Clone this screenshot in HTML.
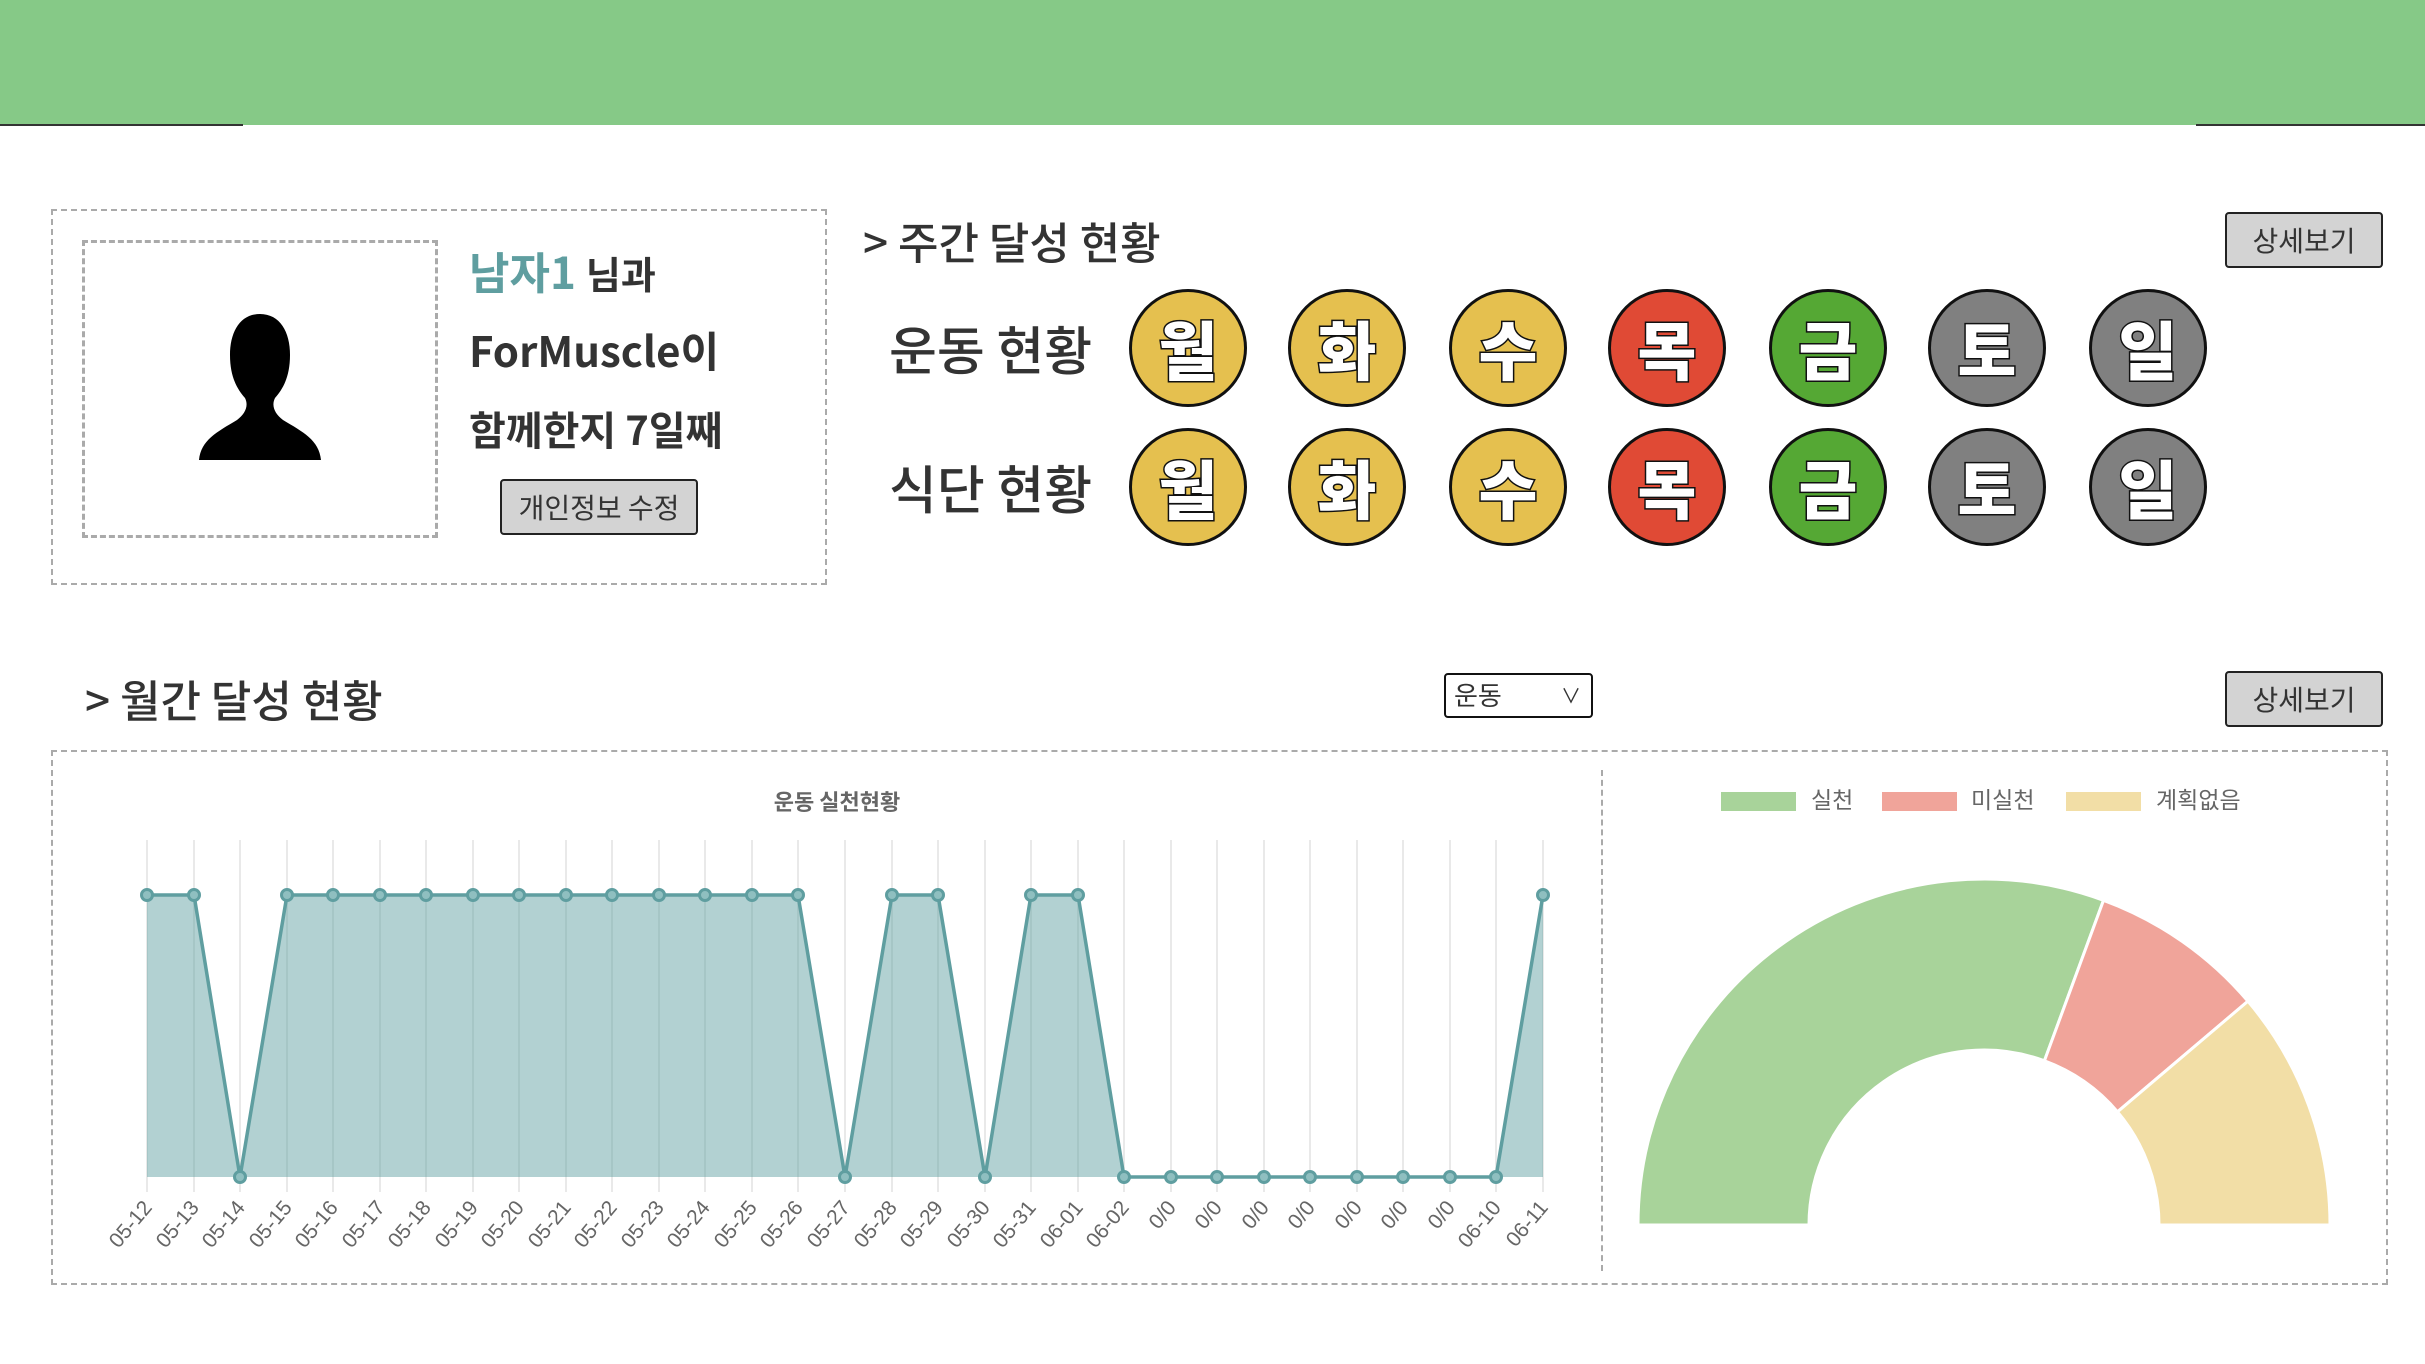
<!DOCTYPE html>
<html><head><meta charset="utf-8"><style>
*{margin:0;padding:0;box-sizing:border-box}
body{width:2425px;height:1364px;position:relative;background:#fff;font-family:"Liberation Sans","Noto Sans CJK KR",sans-serif;color:#333;overflow:hidden}
.a{position:absolute}
.k{font-family:"Noto Sans CJK KR","Liberation Sans",sans-serif;font-weight:700;white-space:nowrap}
.btn{position:absolute;background:#d3d3d3;border:2px solid #222;border-radius:4px;display:flex;align-items:center;justify-content:center;font-family:"Noto Sans CJK KR",sans-serif;font-size:28px;color:#333}
.c{position:absolute;width:118px;height:118px;border-radius:50%;border:3px solid #111;display:flex;align-items:center;justify-content:center;font-family:"Noto Sans CJK KR",sans-serif;font-weight:900;font-size:64px;color:#fff;-webkit-text-stroke:3px #111;paint-order:stroke fill;line-height:1}
.y{background:#e5c04f}.r{background:#e04a35}.g{background:#55a834}.d{background:#808080}
</style></head><body>
<div class="a" style="left:0;top:0;width:2425px;height:125px;background:#86c987"></div>
<div class="a" style="left:0;top:124px;width:243px;height:2px;background:#333"></div>
<div class="a" style="left:2196px;top:124px;width:229px;height:2px;background:#333"></div>

<div class="a" style="left:51px;top:209px;width:776px;height:376px;border:2px dashed #aaa"></div>
<div class="a" style="left:82px;top:240px;width:356px;height:298px;border:3px dashed #aaa"></div>
<svg class="a" style="left:195px;top:310px" width="130" height="152" viewBox="0 0 130 152">
<path d="M65 4C45 4 35 22 35 45C35 68 43 80 50 88C54 96 50 104 42 110C22 122 6 130 4 150L126 150C124 130 108 122 88 110C80 104 76 96 80 88C87 80 95 68 95 45C95 22 85 4 65 4Z" fill="#000"/></svg>
<div class="a k" style="left:469px;top:240px;font-size:44px;line-height:60px"><span style="color:#5f9ea0">남자1</span> <span style="font-size:38px">님과</span></div>
<div class="a k" style="left:469px;top:320px;font-size:42px;line-height:60px">ForMuscle이</div>
<div class="a k" style="left:469px;top:398px;font-size:40px;line-height:60px">함께한지 7일째</div>
<div class="btn" style="left:500px;top:479px;width:198px;height:56px">개인정보 수정</div>

<div class="a k" style="left:863px;top:210px;font-size:44px;line-height:60px;font-weight:500">&gt; 주간 달성 현황</div>
<div class="btn" style="left:2225px;top:212px;width:158px;height:56px">상세보기</div>
<div class="a k" style="left:889px;top:316px;font-size:52px;line-height:64px;font-weight:500">운동 현황</div>
<div class="a k" style="left:889px;top:455px;font-size:52px;line-height:64px;font-weight:500">식단 현황</div>

<div class="c y" style="left:1129px;top:289px">월</div>
<div class="c y" style="left:1288px;top:289px">화</div>
<div class="c y" style="left:1449px;top:289px">수</div>
<div class="c r" style="left:1608px;top:289px">목</div>
<div class="c g" style="left:1769px;top:289px">금</div>
<div class="c d" style="left:1928px;top:289px">토</div>
<div class="c d" style="left:2089px;top:289px">일</div>
<div class="c y" style="left:1129px;top:428px">월</div>
<div class="c y" style="left:1288px;top:428px">화</div>
<div class="c y" style="left:1449px;top:428px">수</div>
<div class="c r" style="left:1608px;top:428px">목</div>
<div class="c g" style="left:1769px;top:428px">금</div>
<div class="c d" style="left:1928px;top:428px">토</div>
<div class="c d" style="left:2089px;top:428px">일</div>

<div class="a k" style="left:85px;top:668px;font-size:44px;line-height:60px;font-weight:500">&gt; 월간 달성 현황</div>
<div class="a" style="left:1444px;top:673px;width:149px;height:45px;border:2px solid #111;border-radius:4px;font-family:'Noto Sans CJK KR',sans-serif;font-size:26px;padding-left:8px;line-height:40px">운동<span style="position:absolute;right:10px;top:0;font-size:20px">&#8744;</span></div>
<div class="btn" style="left:2225px;top:671px;width:158px;height:56px">상세보기</div>

<div class="a" style="left:51px;top:750px;width:2337px;height:535px;border:2px dashed #aaa"></div>
<div class="a" style="left:1601px;top:770px;width:0;height:501px;border-left:2px dashed #aaa"></div>

<svg class="a" style="left:0;top:0" width="2425" height="1364">
<text x="837" y="810" text-anchor="middle" font-family="Noto Sans CJK KR,sans-serif" font-weight="700" font-size="22" fill="#666">운동 실천현황</text>
<g stroke="#e2e2e2" stroke-width="1.5">
<path d="M147 840V1192M194 840V1192M240 840V1192M287 840V1192M333 840V1192M380 840V1192M426 840V1192M473 840V1192M519 840V1192M566 840V1192M612 840V1192M659 840V1192M705 840V1192M752 840V1192M798 840V1192M845 840V1192M892 840V1192M938 840V1192M985 840V1192M1031 840V1192M1078 840V1192M1124 840V1192M1171 840V1192M1217 840V1192M1264 840V1192M1310 840V1192M1357 840V1192M1403 840V1192M1450 840V1192M1496 840V1192M1543 840V1192"/>
</g>
<path d="M147 895L194 895L240 1177L287 895L333 895L380 895L426 895L473 895L519 895L566 895L612 895L659 895L705 895L752 895L798 895L845 1177L892 895L938 895L985 1177L1031 895L1078 895L1124 1177L1171 1177L1217 1177L1264 1177L1310 1177L1357 1177L1403 1177L1450 1177L1496 1177L1543 895L1543 1177L147 1177Z" fill="rgba(95,158,160,0.48)"/>
<path d="M147 895L194 895L240 1177L287 895L333 895L380 895L426 895L473 895L519 895L566 895L612 895L659 895L705 895L752 895L798 895L845 1177L892 895L938 895L985 1177L1031 895L1078 895L1124 1177L1171 1177L1217 1177L1264 1177L1310 1177L1357 1177L1403 1177L1450 1177L1496 1177L1543 895" fill="none" stroke="#5f9ea0" stroke-width="3.5"/>
<g fill="#8fbfc0" stroke="#5f9ea0" stroke-width="3">
<circle cx="147" cy="895" r="5.5"/><circle cx="194" cy="895" r="5.5"/><circle cx="240" cy="1177" r="5.5"/><circle cx="287" cy="895" r="5.5"/><circle cx="333" cy="895" r="5.5"/><circle cx="380" cy="895" r="5.5"/><circle cx="426" cy="895" r="5.5"/><circle cx="473" cy="895" r="5.5"/><circle cx="519" cy="895" r="5.5"/><circle cx="566" cy="895" r="5.5"/><circle cx="612" cy="895" r="5.5"/><circle cx="659" cy="895" r="5.5"/><circle cx="705" cy="895" r="5.5"/><circle cx="752" cy="895" r="5.5"/><circle cx="798" cy="895" r="5.5"/><circle cx="845" cy="1177" r="5.5"/><circle cx="892" cy="895" r="5.5"/><circle cx="938" cy="895" r="5.5"/><circle cx="985" cy="1177" r="5.5"/><circle cx="1031" cy="895" r="5.5"/><circle cx="1078" cy="895" r="5.5"/><circle cx="1124" cy="1177" r="5.5"/><circle cx="1171" cy="1177" r="5.5"/><circle cx="1217" cy="1177" r="5.5"/><circle cx="1264" cy="1177" r="5.5"/><circle cx="1310" cy="1177" r="5.5"/><circle cx="1357" cy="1177" r="5.5"/><circle cx="1403" cy="1177" r="5.5"/><circle cx="1450" cy="1177" r="5.5"/><circle cx="1496" cy="1177" r="5.5"/><circle cx="1543" cy="895" r="5.5"/>
</g>
<g font-family="Liberation Sans,sans-serif" font-size="21" fill="#666" text-anchor="end">
<text transform="translate(153 1208) rotate(-50)">05-12</text><text transform="translate(200 1208) rotate(-50)">05-13</text><text transform="translate(246 1208) rotate(-50)">05-14</text><text transform="translate(293 1208) rotate(-50)">05-15</text><text transform="translate(339 1208) rotate(-50)">05-16</text><text transform="translate(386 1208) rotate(-50)">05-17</text><text transform="translate(432 1208) rotate(-50)">05-18</text><text transform="translate(479 1208) rotate(-50)">05-19</text><text transform="translate(525 1208) rotate(-50)">05-20</text><text transform="translate(572 1208) rotate(-50)">05-21</text><text transform="translate(618 1208) rotate(-50)">05-22</text><text transform="translate(665 1208) rotate(-50)">05-23</text><text transform="translate(711 1208) rotate(-50)">05-24</text><text transform="translate(758 1208) rotate(-50)">05-25</text><text transform="translate(804 1208) rotate(-50)">05-26</text><text transform="translate(851 1208) rotate(-50)">05-27</text><text transform="translate(898 1208) rotate(-50)">05-28</text><text transform="translate(944 1208) rotate(-50)">05-29</text><text transform="translate(991 1208) rotate(-50)">05-30</text><text transform="translate(1037 1208) rotate(-50)">05-31</text><text transform="translate(1084 1208) rotate(-50)">06-01</text><text transform="translate(1130 1208) rotate(-50)">06-02</text><text transform="translate(1177 1208) rotate(-50)">0/0</text><text transform="translate(1223 1208) rotate(-50)">0/0</text><text transform="translate(1270 1208) rotate(-50)">0/0</text><text transform="translate(1316 1208) rotate(-50)">0/0</text><text transform="translate(1363 1208) rotate(-50)">0/0</text><text transform="translate(1409 1208) rotate(-50)">0/0</text><text transform="translate(1456 1208) rotate(-50)">0/0</text><text transform="translate(1502 1208) rotate(-50)">06-10</text><text transform="translate(1549 1208) rotate(-50)">06-11</text>
</g>
<rect x="1721" y="792" width="75" height="19" fill="#a8d39a"/>
<rect x="1882" y="792" width="75" height="19" fill="#f0a49a"/>
<rect x="2066" y="792" width="75" height="19" fill="#f2dea6"/>
<g font-family="Noto Sans CJK KR,sans-serif" font-size="23" fill="#666">
<text x="1811" y="808">실천</text><text x="1971" y="808">미실천</text><text x="2156" y="808">계획없음</text>
</g>
<g stroke="#fff" stroke-width="3">
<path d="M1638 1225A346 346 0 0 1 2103.5 900.3L2044.4 1060.8A175 175 0 0 0 1809 1225Z" fill="#a8d39a"/>
<path d="M2103.5 900.3A346 346 0 0 1 2247.9 1001.2L2117.5 1111.8A175 175 0 0 0 2044.4 1060.8Z" fill="#f0a49a"/>
<path d="M2247.9 1001.2A346 346 0 0 1 2330 1225L2159 1225A175 175 0 0 0 2117.5 1111.8Z" fill="#f2dea6"/>
</g>
</svg>
</body></html>
